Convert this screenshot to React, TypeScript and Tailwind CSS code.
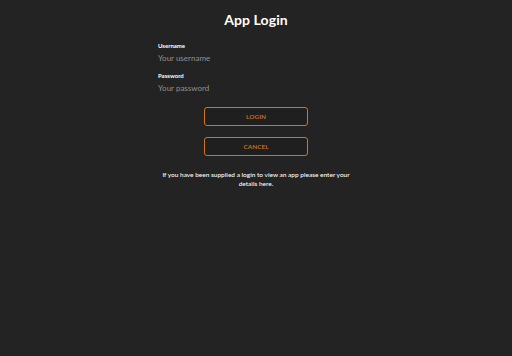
import React, { useState } from 'react'

const App = () => {
  const [username, setUsername] = useState('')
  const [password, setPassword] = useState('')

  return (
    <div
      className="w-full min-h-[356px] bg-[#232323] flex flex-col items-center pt-[11px]"
      style={{ fontFamily: 'Lato, "Liberation Sans", sans-serif' }}
    >
      <h1 className="text-[14px] leading-[18px] font-bold text-white tracking-[0.1px]">App Login</h1>
      <form
        className="w-[196px] flex flex-col mt-[13px]"
        onSubmit={(e) => e.preventDefault()}
      >
        <label className="text-[6px] leading-[8px] font-bold text-white">Username</label>
        <input
          className="bg-transparent outline-none text-[8px] leading-[10px] h-[14px] mt-[1px] text-gray-300 placeholder:text-[#909090]"
          placeholder="Your username"
          value={username}
          onChange={(e) => setUsername(e.target.value)}
        />
        <label className="text-[6px] leading-[8px] font-bold text-white mt-[7px]">Password</label>
        <input
          type="password"
          className="bg-transparent outline-none text-[8px] leading-[10px] h-[14px] mt-[1px] text-gray-300 placeholder:text-[#909090]"
          placeholder="Your password"
          value={password}
          onChange={(e) => setPassword(e.target.value)}
        />
        <div className="flex flex-col items-center gap-[11px] mt-[12px]">
          <button
            type="submit"
            className="w-[104px] h-[19px] rounded-[3px] border-[1.5px] border-[#d4760c] bg-[#1f1f1f] text-[#d4760c] text-[6.5px] font-semibold"
          >
            LOGIN
          </button>
          <button
            type="button"
            className="w-[104px] h-[19px] rounded-[3px] border-[1.5px] border-[#d4760c] bg-[#1f1f1f] text-[#d4760c] text-[6.5px] font-semibold"
          >
            CANCEL
          </button>
        </div>
      </form>
      <p className="w-[200px] mt-[14px] text-center text-[6.5px] leading-[9px] font-medium text-white">
        If you have been supplied a login to view an app please enter your details here.
      </p>
    </div>
  )
}

export default App
